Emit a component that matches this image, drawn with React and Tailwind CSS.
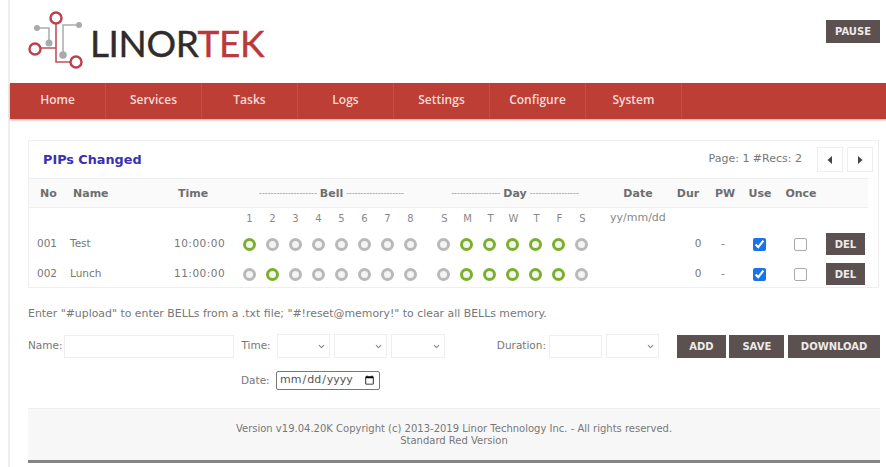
import React from 'react';
import { ChevronDown } from 'lucide-react';

const navItems = ['Home', 'Services', 'Tasks', 'Logs', 'Settings', 'Configure', 'System'];
const bellNums = ['1', '2', '3', '4', '5', '6', '7', '8'];
const dayNames = ['S', 'M', 'T', 'W', 'T', 'F', 'S'];

const records = [
    { no: '001', name: 'Test', time: '10:00:00', bells: [1], once: false },
    { no: '002', name: 'Lunch', time: '11:00:00', bells: [2], once: false },
];

const Logo = () => (
    <svg width="60" height="62" viewBox="26 10 60 62" fill="none">
        <path d="M37 28H49V42" stroke="#a9abab" strokeWidth="1.5" />
        <path d="M79 25H63V54" stroke="#a9abab" strokeWidth="1.5" />
        <circle cx="37" cy="28" r="3" fill="#a9abab" />
        <circle cx="79" cy="25" r="3" fill="#a9abab" />
        <circle cx="49" cy="43" r="3.5" fill="#a9abab" />
        <circle cx="63" cy="55" r="3.8" fill="#a9abab" />
        <path d="M56 24V62H70M41 48H56" stroke="#c2505a" strokeWidth="1.6" />
        <circle cx="56" cy="18" r="5.5" stroke="#bd3f4b" strokeWidth="2.4" fill="#fff" />
        <circle cx="35" cy="49" r="5.5" stroke="#bd3f4b" strokeWidth="2.4" fill="#fff" />
        <circle cx="76" cy="62" r="5.5" stroke="#bd3f4b" strokeWidth="2.4" fill="#fff" />
    </svg>
);

const Dot = ({ on }) => (
    <div className="w-[23px] flex justify-center">
        <span className={`block w-[13px] h-[13px] rounded-full border-[3px] bg-[#f4f4f4] ${on ? 'border-[#7cb02c]' : 'border-[#b9b9b9]'}`} />
    </div>
);

const Label = ({ className, children }) => (
    <span className={`text-[#777] ${className}`}>{children}</span>
);

const Select = ({ className }) => (
    <div className={`relative h-[24px] ${className}`}>
        <select className="w-full h-full appearance-none bg-white border border-[#eeeeee] text-[#777]">
            <option></option>
        </select>
        <ChevronDown size={9} strokeWidth={3} className="absolute right-[4px] top-[8px] text-[#888]" />
    </div>
);

const DarkButton = ({ className, children }) => (
    <button className={`bg-[#5a5150] text-[#efeaea] font-bold text-[10px] flex items-center justify-center ${className}`}>
        {children}
    </button>
);

const PageButton = ({ d, className }) => (
    <div className={`w-[26px] h-[25px] border border-[#eeeeee] flex items-center justify-center ${className}`}>
        <svg width="8" height="10" viewBox="0 0 8 10" fill="#444">
            <path d={d} />
        </svg>
    </div>
);

const App = () => {
    return (
        <div className="w-[886px] h-[467px] overflow-hidden bg-white pl-2 font-['DejaVu_Sans',sans-serif]">
            <div className="h-full border-l-2 border-[#eeeeee]">
                {/* Header */}
                <div className="h-[83px] flex justify-between pr-[6px]">
                    <div className="flex items-start pl-4 pt-[10px]">
                        <Logo />
                        <div className="ml-[4px] mt-[8px] font-['Lato',sans-serif] text-[37px] leading-[50px] tracking-[-0.4px] [-webkit-text-stroke:0.4px]">
                            <span className="text-[#2f2c2a]">LINOR</span>
                            <span className="text-[#b9393d]">TEK</span>
                        </div>
                    </div>
                    <DarkButton className="mt-[20px] w-[54px] h-[23px] text-[9px]">PAUSE</DarkButton>
                </div>

                {/* Nav */}
                <div className="h-[36px] flex bg-[#bc3e35] shadow-[0_1px_2px_#d9a09a]">
                    {navItems.map((item) => (
                        <div key={item} className="w-[96px] pb-[2px] border-r border-[#c44f46] flex items-center justify-center text-[#f6dcd8] text-[12px] font-semibold font-['Open_Sans',sans-serif]">
                            {item}
                        </div>
                    ))}
                </div>

                <div className="pl-[18px] pr-[6px]">
                    {/* Bell table */}
                    <div className="mt-[21px] h-[148px] border border-[#eeeeee] mr-[1px] text-[10.5px] text-[#777]">
                        <div className="h-[37px] flex items-center justify-between pl-[14px] pr-[5px]">
                            <span className="pt-[1px] text-[#3a2fb5] font-bold text-[12.8px]">PIPs Changed</span>
                            <div className="flex items-center">
                                <span className="text-[11px] mr-[15px]">Page: 1 #Recs: 2</span>
                                <PageButton d="M6 1 1.5 5 6 9z" className="mr-1" />
                                <PageButton d="M2 1 6.5 5 2 9z" />
                            </div>
                        </div>

                        <div className="h-[30px] pt-[2px] mr-[10px] flex items-center bg-[#fafafa] border-y border-[#efefef] font-bold text-[#6e6e6e] text-[11px] whitespace-nowrap">
                            <span className="w-[44px] pl-[11px]">No</span>
                            <span className="w-[105px]">Name</span>
                            <span className="w-[77px]">Time</span>
                            <div className="w-[153px] flex items-center justify-center gap-[3px]">
                                <span className="font-normal text-[8px] text-[#999]">--------------------</span>Bell<span className="font-normal text-[8px] text-[#999]">--------------------</span>
                            </div>
                            <div className="ml-[40px] w-[134px] flex items-center justify-center gap-[3px]">
                                <span className="font-normal text-[8px] text-[#999]">-----------------</span>Day<span className="font-normal text-[8px] text-[#999]">-----------------</span>
                            </div>
                            <span className="ml-[26px] w-[60px] text-center">Date</span>
                            <span className="ml-[2px] w-[36px] text-center">Dur</span>
                            <span className="ml-[2px] w-[34px] text-center">PW</span>
                            <span className="w-[36px] text-center">Use</span>
                            <span className="w-[46px] text-center">Once</span>
                        </div>

                        <div className="h-[21px] flex items-center text-[10px] text-[#888]">
                            <div className="ml-[209px] flex">
                                {bellNums.map((n) => (
                                    <span key={n} className="w-[23px] text-center">{n}</span>
                                ))}
                            </div>
                            <div className="ml-[11px] flex">
                                {dayNames.map((d, i) => (
                                    <span key={i} className="w-[23px] text-center">{d}</span>
                                ))}
                            </div>
                            <span className="ml-[16px] text-[11px]">yy/mm/dd</span>
                        </div>

                        {records.map((rec) => (
                            <div key={rec.no} className="h-[30px] flex items-center">
                                <span className="w-[41px] pl-[8px]">{rec.no}</span>
                                <span className="w-[104px]">{rec.name}</span>
                                <span className="w-[64px] tracking-[0.5px]">{rec.time}</span>
                                <div className="flex">
                                    {bellNums.map((n, i) => <Dot key={n} on={rec.bells.includes(i + 1)} />)}
                                </div>
                                <div className="ml-[10px] flex">
                                    {dayNames.map((d, i) => <Dot key={i} on={i >= 1 && i <= 5} />)}
                                </div>
                                <span className="ml-[90px] w-[30px] text-center">0</span>
                                <span className="w-[20px] text-center">-</span>
                                <div className="ml-[6px] w-[40px] flex justify-center">
                                    <input type="checkbox" readOnly checked className="w-[13px] h-[13px] accent-[#1a73e8]" />
                                </div>
                                <div className="w-[42px] flex justify-center">
                                    <input type="checkbox" readOnly checked={rec.once} className="w-[13px] h-[13px] appearance-none bg-white border border-[#aaaaaa] rounded-[2px]" />
                                </div>
                                <DarkButton className="ml-[5px] w-[39px] h-[22px]">DEL</DarkButton>
                            </div>
                        ))}
                    </div>

                    <p className="mt-[19px] h-[14px] text-[10.9px] leading-[14px] text-[#777] whitespace-nowrap">
                        Enter "#upload" to enter BELLs from a .txt file; "#!reset@memory!" to clear all BELLs memory.
                    </p>

                    {/* Add form */}
                    <div className="mt-[13px] h-[24px] flex items-center text-[10.5px]">
                        <Label className="w-[36px]">Name:</Label>
                        <input className="w-[171px] h-[23px] border border-[#eeeeee]" />
                        <Label className="ml-[7px] w-[36px]">Time:</Label>
                        <Select className="w-[53px]" />
                        <Select className="ml-1 w-[53px]" />
                        <Select className="ml-1 w-[54px]" />
                        <Label className="ml-[52px] w-[52px]">Duration:</Label>
                        <input className="w-[53px] h-[23px] border border-[#eeeeee]" />
                        <Select className="ml-1 w-[53px]" />
                        <DarkButton className="ml-[18px] w-[50px] h-[23px]">ADD</DarkButton>
                        <DarkButton className="ml-[3px] w-[55px] h-[23px]">SAVE</DarkButton>
                        <DarkButton className="ml-[4px] w-[92px] h-[23px]">DOWNLOAD</DarkButton>
                    </div>

                    <div className="mt-[13px] h-[19px] flex items-center text-[10.5px] pl-[213px]">
                        <Label className="w-[35px]">Date:</Label>
                        <input type="date" className="w-[104px] h-[19px] border border-[#777] rounded-[2px] px-[2px] text-[11px] text-[#555]" />
                    </div>

                    {/* Footer */}
                    <div className="mt-[18px] h-[55px] bg-[#f7f7f7] border-t border-[#eeeeee] border-b-[3px] border-b-[#858585] flex flex-col items-center justify-center text-[10px] leading-[12px] text-[#777]">
                        <span>Version v19.04.20K Copyright (c) 2013-2019 Linor Technology Inc. - All rights reserved.</span>
                        <span>Standard Red Version</span>
                    </div>
                </div>
            </div>
        </div>
    );
};

export default App;
